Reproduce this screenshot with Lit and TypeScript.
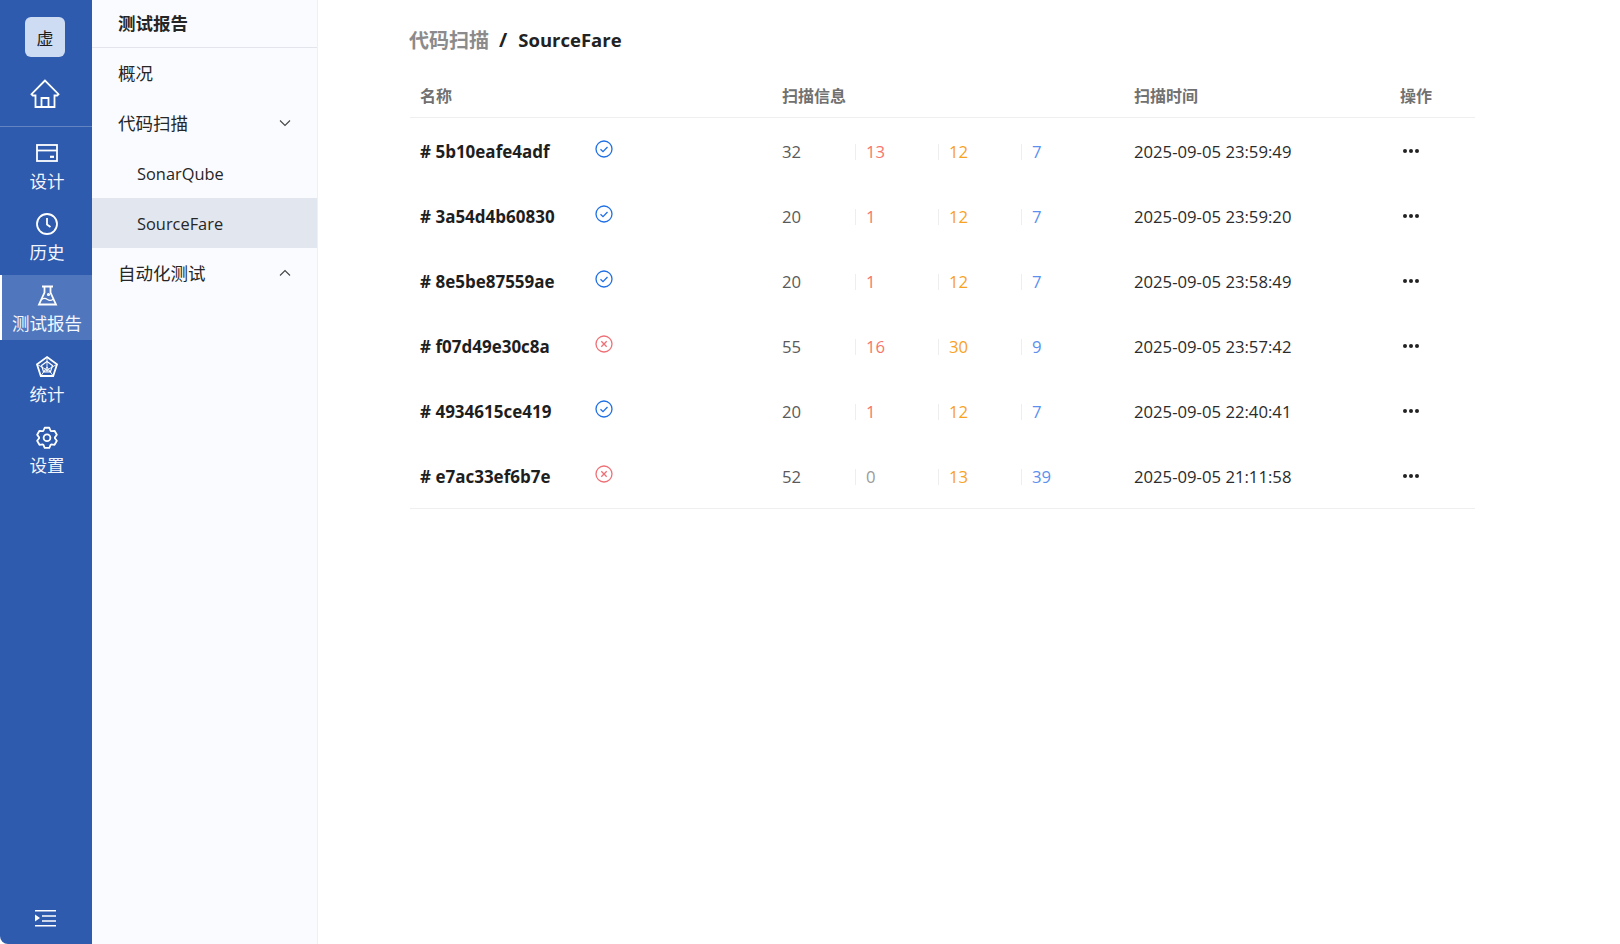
import { LitElement, html, css, svg } from "lit";
import { customElement } from "lit/decorators.js";

const gearPath = (() => {
  const pts: string[] = [];
  for (let i = 0; i < 6; i++) {
    const a = -90 + i * 60;
    for (const [off, r] of [[-27, 7.9], [-13, 10.3], [13, 10.3], [27, 7.9]] as const) {
      const t = ((a + off) * Math.PI) / 180;
      pts.push(`${(11 + r * Math.cos(t)).toFixed(2)} ${(11 + r * Math.sin(t)).toFixed(2)}`);
    }
  }
  return "M" + pts.join("L") + "Z";
})();

const ic = {
  home: svg`<path d="M15 1.500 1.500 15.200l1.300 1.300h2.700V28h19V16.500h2.700l1.300-1.300L15 1.500Z"/><path d="M11.500 28v-9h7v9"/>`,
  design: svg`<rect x="1" y="1" width="20" height="16"/><path d="M1 6.500h20"/><path d="M14 12.800h4" stroke-width="2.200"/>`,
  history: svg`<circle cx="11" cy="11" r="10"/><path d="M11 5v6.500l3.500 2.500"/>`,
  flask: svg`<path d="M5 1.500h11M7.500 1.500v6L2 19.500h17L13.500 7.500v-6"/><path d="M4.500 14.500c2-1.500 4-1.500 6 0s4 1 6-.5" stroke-width="1.200"/><circle cx="11.500" cy="9.500" r=".7"/>`,
  radar: svg`<path d="M11 1 21 8.300 17.200 20H4.800L1 8.300 11 1Z"/><path d="M11 5.500 16.500 9.500 14.400 16H7.600L5.500 9.500 11 5.500Z" stroke-width="1.200"/><path d="M11 1v15M1 8.300 14.400 16M21 8.300 7.600 16M11 11 4.800 20M11 11l6.200 9" stroke-width=".9"/>`,
  gear: svg`<g transform="translate(0 .8)"><path d="${gearPath}" stroke-linejoin="round"/><circle cx="11" cy="11" r="3.400"/></g>`,
};

interface Row { id: string; ok: boolean; total: number; a: number; b: number; c: number; time: string; }
const rows: Row[] = [
  { id: "5b10eafe4adf", ok: true, total: 32, a: 13, b: 12, c: 7, time: "2025-09-05 23:59:49" },
  { id: "3a54d4b60830", ok: true, total: 20, a: 1, b: 12, c: 7, time: "2025-09-05 23:59:20" },
  { id: "8e5be87559ae", ok: true, total: 20, a: 1, b: 12, c: 7, time: "2025-09-05 23:58:49" },
  { id: "f07d49e30c8a", ok: false, total: 55, a: 16, b: 30, c: 9, time: "2025-09-05 23:57:42" },
  { id: "4934615ce419", ok: true, total: 20, a: 1, b: 12, c: 7, time: "2025-09-05 22:40:41" },
  { id: "e7ac33ef6b7e", ok: false, total: 52, a: 0, b: 13, c: 39, time: "2025-09-05 21:11:58" },
];

const railItems = [
  { label: "设计", icon: ic.design, w: 22, h: 18 },
  { label: "历史", icon: ic.history, w: 22, h: 22 },
  { label: "测试报告", icon: ic.flask, w: 21, h: 21, active: true },
  { label: "统计", icon: ic.radar, w: 22, h: 21 },
  { label: "设置", icon: ic.gear, w: 22, h: 22 },
];

@customElement("app-root")
export class AppRoot extends LitElement {
  static styles = css`
    :host { display: block; height: 944px; overflow: hidden; font-family: "Open Sans", "Noto Sans CJK SC", sans-serif; background: #fff; color: #222; }
    .app { display: flex; height: 944px; }

    .rail { width: 92px; flex: none; background: #2e5bae; border-bottom-left-radius: 8px; display: flex; flex-direction: column; color: #fff; }
    .avatar { width: 40px; height: 40px; margin: 17px 0 0 25px; border-radius: 6px; background: #cddcf3; color: #1c1c1c; font-size: 17px; display: flex; align-items: center; justify-content: center; }
    .home { height: 70px; display: flex; justify-content: center; padding: 22px 2px 0 0; box-sizing: border-box; border-bottom: 1px solid rgba(255,255,255,.25); }
    .home svg { width: 30px; height: 30px; }
    .items { display: flex; flex-direction: column; gap: 6px; margin-top: 6px; }
    .item { height: 65px; box-sizing: border-box; display: flex; flex-direction: column; align-items: center; border-left: 2px solid transparent; }
    .item.active { background: #5077bd; border-left-color: #fff; }
    .icon-box { height: 38px; box-sizing: border-box; display: flex; align-items: center; justify-content: center; padding-top: 2px; }
    .rail-ic { fill: none; stroke: #fff; stroke-width: 1.800; overflow: visible; }
    .item-label { font-size: 17.500px; line-height: 20px; color: #f3f6fc; white-space: nowrap; }
    .collapse { margin-top: auto; height: 45px; display: flex; justify-content: center; padding-right: 2px; }
    .collapse svg { width: 22px; height: 20px; margin-top: 9px; }

    .side { width: 226px; flex: none; background: #fafbfe; border-right: 1px solid #eff0f3; box-sizing: border-box; font-size: 17.500px; color: #262626; }
    .side-title { height: 48px; border-bottom: 1px solid #e3e5ec; box-sizing: border-box; padding: 0 0 2px 26px; display: flex; align-items: center; font-weight: 700; }
    .nav { height: 50px; box-sizing: border-box; padding: 0 26px 2px 26px; display: flex; align-items: center; justify-content: space-between; }
    .nav.sub { padding: 0 26px 0 45px; font-size: 16.400px; }
    .nav.sel { background: #e2e6ef; }
    .chev { width: 12px; height: 8px; margin-top: 2px; fill: none; stroke: #444; stroke-width: 1.100; }

    .main { flex: 1; padding: 0 145px 0 92px; min-width: 0; }
    .crumb { height: 75px; display: flex; align-items: center; font-weight: 700; padding-top: 3px; box-sizing: border-box; margin-left: -1px; }
    .crumb .par { color: #8b8b8b; font-size: 20px; font-weight: 600; }
    .crumb .sep { margin: 0 11px 0 10px; color: #222; font-size: 20px; }
    .crumb .cur { color: #222; font-size: 18.500px; }

    .thead, .row { display: grid; grid-template-columns: 362px 351px 267px 1fr; }
    .thead { height: 43px; border-bottom: 1px solid #efefef; box-sizing: border-box; padding-bottom: 2px; font-size: 16px; font-weight: 700; color: #717171; align-items: center; }
    .cell { padding-left: 10px; }
    .cell.time { padding-left: 11px; }
    .row { height: 65px; box-sizing: border-box; padding-top: 2px; align-items: center; font-size: 16.700px; color: #2b2b2b; }
    .tbody { border-bottom: 1px solid #efefef; }
    .name { display: flex; align-items: center; }
    .id { width: 175px; font-size: 17px; font-weight: 700; color: #1e1e1e; }
    .status { width: 18px; height: 18px; margin-top: -5px; fill: none; stroke-width: 1.300; }
    .status.ok { stroke: #1f6fe5; }
    .status.bad { stroke: #ee6f75; }
    .stats { display: flex; align-items: center; }
    .total { width: 73px; color: #5a5a5a; }
    .stat { width: 83px; box-sizing: border-box; border-left: 1px solid #eeeeee; padding-left: 10px; height: 16px; display: flex; align-items: center; }
    .red { color: #f7766c; }
    .orange { color: #f9a21f; }
    .blue { color: #5c8fee; }
    .zero { color: #9a9a9a; }
    .more { width: 20px; height: 6px; margin: -2px 0 0 1px; display: block; fill: #222; }
  `;

  private statusIcon(ok: boolean) {
    return ok
      ? html`<svg class="status ok" viewBox="0 0 18 18"><circle cx="9" cy="9" r="8"/><path d="m5.500 9.300 2.500 2.400 4.500-4.700"/></svg>`
      : html`<svg class="status bad" viewBox="0 0 18 18"><circle cx="9" cy="9" r="8"/><path d="m6.300 6.300 5.400 5.400m0-5.400-5.400 5.400"/></svg>`;
  }

  render() {
    return html`<div class="app">
      <aside class="rail">
        <div class="avatar">虚</div>
        <div class="home"><svg class="rail-ic" viewBox="0 0 30 30">${ic.home}</svg></div>
        <div class="items">
          ${railItems.map(
            (i) => html`<div class="item ${i.active ? "active" : ""}">
              <div class="icon-box"><svg class="rail-ic" width=${i.w} height=${i.h} viewBox="0 0 ${i.w} ${i.h}">${i.icon}</svg></div>
              <div class="item-label">${i.label}</div>
            </div>`
          )}
        </div>
        <div class="collapse">
          <svg viewBox="0 0 22 20" fill="#fff">
            <path d="M1 2h21v1.500H1zM8 7.200h14v1.500H8zM8 12.200h14v1.500H8zM1 17h21v1.500H1z"/><path d="M1 6.500 6 10l-5 3.500z"/>
          </svg>
        </div>
      </aside>
      <nav class="side">
        <div class="side-title">测试报告</div>
        <div class="nav">概况</div>
        <div class="nav">代码扫描<svg class="chev" viewBox="0 0 12 8"><path d="m1 1.500 5 5 5-5"/></svg></div>
        <div class="nav sub">SonarQube</div>
        <div class="nav sub sel">SourceFare</div>
        <div class="nav">自动化测试<svg class="chev" viewBox="0 0 12 8"><path d="m1 6.500 5-5 5 5"/></svg></div>
      </nav>
      <main class="main">
        <div class="crumb"><span class="par">代码扫描</span><span class="sep">/</span><span class="cur">SourceFare</span></div>
        <div class="thead">
          <div class="cell">名称</div><div class="cell">扫描信息</div><div class="cell time">扫描时间</div><div class="cell">操作</div>
        </div>
        <div class="tbody">
          ${rows.map(
            (r) => html`<div class="row">
              <div class="cell name"><span class="id"># ${r.id}</span>${this.statusIcon(r.ok)}</div>
              <div class="cell stats">
                <span class="total">${r.total}</span>
                <span class="stat ${r.a === 0 ? "zero" : "red"}">${r.a}</span>
                <span class="stat orange">${r.b}</span>
                <span class="stat blue">${r.c}</span>
              </div>
              <div class="cell time">${r.time}</div>
              <div class="cell"><svg class="more" viewBox="0 0 20 6"><circle cx="4" cy="3" r="2"/><circle cx="10" cy="3" r="2"/><circle cx="16" cy="3" r="2"/></svg></div>
            </div>`
          )}
        </div>
      </main>
    </div>`;
  }
}
